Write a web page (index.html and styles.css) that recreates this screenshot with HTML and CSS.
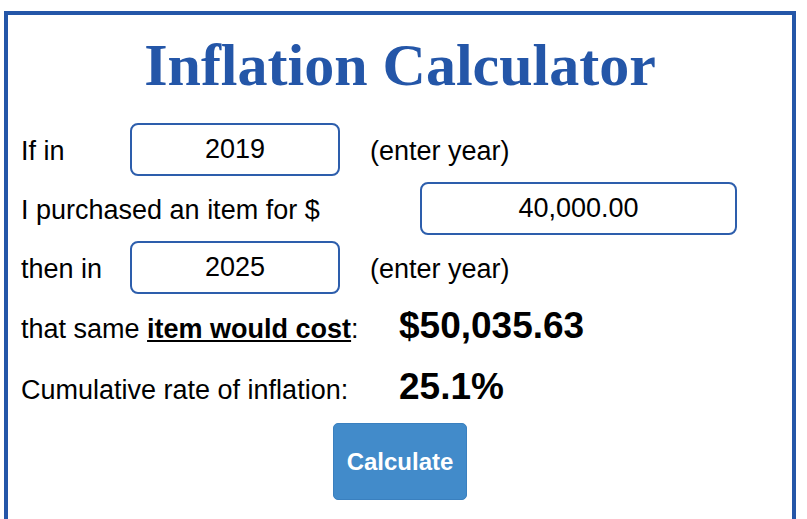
FILE: index.html
```html
<!DOCTYPE html>
<html lang="en">
<head>
    <meta charset="UTF-8">
    <meta name="viewport" content="width=device-width, initial-scale=1.0">
    <title>Inflation Calculator</title>
    <link rel="stylesheet" href="styles.css">
</head>
<body>
    <div class="calc-box">
        <h1>Inflation Calculator</h1>

        <div class="row">
            <span class="label label-short">If in</span>
            <input class="field field-year" type="text" value="2019">
            <span class="hint">(enter year)</span>
        </div>

        <div class="row">
            <span class="label label-long">I purchased an item for $</span>
            <input class="field field-amount" type="text" value="40,000.00">
        </div>

        <div class="row">
            <span class="label label-short">then in</span>
            <input class="field field-year" type="text" value="2025">
            <span class="hint">(enter year)</span>
        </div>

        <div class="row row-result">
            <span class="label label-result">that same <b><u>item would cost</u></b>:</span>
            <span class="result">$50,035.63</span>
        </div>

        <div class="row row-result row-rate">
            <span class="label label-result">Cumulative rate of inflation:</span>
            <span class="result">25.1%</span>
        </div>

        <div class="actions">
            <button class="btn-calc">Calculate</button>
        </div>
    </div>
</body>
</html>
```

FILE: styles.css
```css
/* General */
body {
    margin: 0;
    padding: 0;
    background-color: #fff;
    font-family: "Liberation Sans", Arial, sans-serif;
    color: #000;
}

/* Main box */
.calc-box {
    box-sizing: border-box;
    width: 792px;
    height: 560px;
    margin: 11px 0 0 4px;
    border: 4px solid #2456a8;
    padding: 0 0 0 13px;
}

h1 {
    margin: 20px 0 25px -13px;
    font-family: "Liberation Serif", "Times New Roman", serif;
    font-size: 60px;
    line-height: 60px;
    font-weight: bold;
    color: #2456a8;
    text-align: center;
}

/* Rows */
.row {
    display: flex;
    align-items: center;
    height: 59px;
    font-size: 27px;
}

.label,
.hint {
    padding-top: 4px;
}

.label-short {
    width: 109px;
}

.label-long {
    width: 399px;
}

.label-result {
    width: 378px;
}

.field {
    box-sizing: border-box;
    height: 53px;
    border: 2px solid #2d5eac;
    border-radius: 8px;
    background: #fff;
    font-family: "Liberation Sans", Arial, sans-serif;
    font-size: 27px;
    color: #000;
    text-align: center;
    padding: 0;
}

.field-year {
    width: 210px;
}

.field-amount {
    width: 317px;
}

.hint {
    margin-left: 30px;
}

/* Results */
.row-result {
    align-items: baseline;
    height: auto;
    margin-top: 8px;
}

.row-result .label {
    padding-top: 0;
}

.row-rate {
    margin-top: 19px;
}

.result {
    font-size: 37px;
    font-weight: bold;
}

/* Button */
.actions {
    display: flex;
    justify-content: center;
    margin: 15px 0 0 -13px;
}

.btn-calc {
    width: 134px;
    height: 77px;
    background-color: #428bca;
    border: 1px solid #3a80bf;
    border-radius: 5px;
    color: #fff;
    font-family: "Liberation Sans", Arial, sans-serif;
    font-size: 24px;
    font-weight: bold;
    cursor: pointer;
}
```
